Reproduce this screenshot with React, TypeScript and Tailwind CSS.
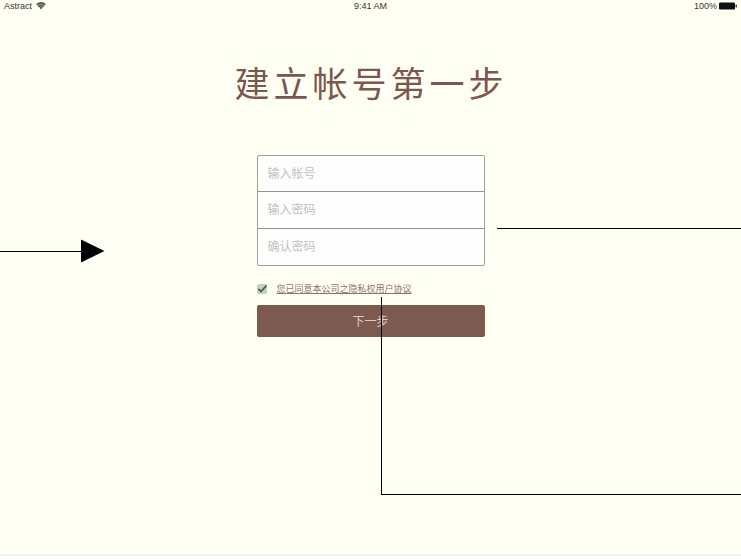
import React, { useState } from "react";

const fields = [
  { id: "account", label: "输入帐号", type: "text" },
  { id: "password", label: "输入密码", type: "password" },
  { id: "confirm", label: "确认密码", type: "password" },
];

function StatusBar() {
  return (
    <header className="grid h-3 grid-cols-3 items-center px-1 font-['Liberation_Sans','Noto_Sans_CJK_SC',sans-serif] text-[9px] leading-3 text-[#333330]">
      <div className="flex items-center gap-1">
        <span>Astract</span>
        <svg className="h-2 w-[10px]" viewBox="0 0 10 8" fill="none" stroke="#555551" strokeWidth="1.8" aria-hidden="true">
          <path d="M.7 2.8Q5-.8 9.3 2.8M2.3 4.6Q5 2.4 7.7 4.6" />
          <path d="M3.4 5.4Q5 4.2 6.6 5.4L5 7.6Z" fill="#555551" stroke="none" />
        </svg>
      </div>
      <span className="text-center">9:41 AM</span>
      <div className="flex items-center justify-end gap-[2px]">
        <span>100%</span>
        <svg className="h-2 w-[18px]" viewBox="0 0 18 8" aria-hidden="true">
          <rect x="0" y="0.5" width="16" height="7" rx="1" fill="#111" />
          <rect x="16.5" y="2.5" width="1.5" height="3" rx=".5" fill="#444" />
        </svg>
      </div>
    </header>
  );
}

function Connectors() {
  return (
    <div className="pointer-events-none absolute inset-0" aria-hidden="true">
      <div className="absolute left-0 top-[239px] flex items-center">
        <div className="h-px w-[81px] bg-black" />
        <svg className="h-6 w-6" viewBox="0 0 24 24">
          <path d="M0 .5L23.5 12L0 23.5Z" fill="#000" />
        </svg>
      </div>
      <div className="absolute left-[497px] right-0 top-[228px] h-px bg-black" />
      <div className="absolute left-[381px] right-0 top-[297px] h-[198px] border-b border-l border-black" />
    </div>
  );
}

export default function App() {
  const [agreed, setAgreed] = useState(true);

  return (
    <div className="relative min-h-screen bg-white pb-1 font-['Noto_Sans_CJK_SC',sans-serif]">
      <main className="flex min-h-[calc(100vh-4px)] flex-col border-b-2 border-[#f5f1e6] bg-[#fffff4]">
        <StatusBar />
        <h1 className="mt-[46px] pl-px text-center text-[35px] font-normal leading-[48px] tracking-[4px] text-[#7d574d]">
          建立帐号第一步
        </h1>
        <form className="mx-auto mt-[49px] w-[228px]" onSubmit={(e) => e.preventDefault()}>
          <div className="grid h-[111px] grid-rows-3 divide-y divide-[#9b8f8b] overflow-hidden rounded-xs border border-[#a89c94] bg-[#fffefe]">
            {fields.map((f) => (
              <input
                key={f.id}
                id={f.id}
                type={f.type}
                aria-label={f.label}
                placeholder={f.label}
                className="block min-h-0 w-full bg-transparent px-[10px] pb-[2px] text-xs leading-6 text-[#7d574d] outline-none placeholder:leading-6 placeholder:text-[#c3bfbf]"
              />
            ))}
          </div>
          <div className="mt-[15px] flex h-4 items-center gap-[10px]">
            <span className="relative flex h-[10px] w-[10px]">
              <input
                id="agree"
                type="checkbox"
                checked={agreed}
                onChange={(e) => setAgreed(e.target.checked)}
                className="h-[10px] w-[10px] appearance-none rounded-xs bg-[#bcd5c2]"
              />
              {agreed && (
                <svg className="pointer-events-none absolute inset-0" viewBox="0 0 10 10" fill="none" stroke="#48564e" strokeWidth="1.8" aria-hidden="true">
                  <path d="M1.5 4.8L4 7.5L9.5 1.5" />
                </svg>
              )}
            </span>
            <label htmlFor="agree" className="whitespace-nowrap text-[9px] leading-4 text-[#8f736b] underline underline-offset-1">
              您已同意本公司之隐私权用户协议
            </label>
          </div>
          <button type="submit" className="mt-2 block h-8 w-full rounded-xs bg-[#7d5a50] text-xs text-[#dccbc5]">
            下一步
          </button>
        </form>
      </main>
      <Connectors />
    </div>
  );
}
